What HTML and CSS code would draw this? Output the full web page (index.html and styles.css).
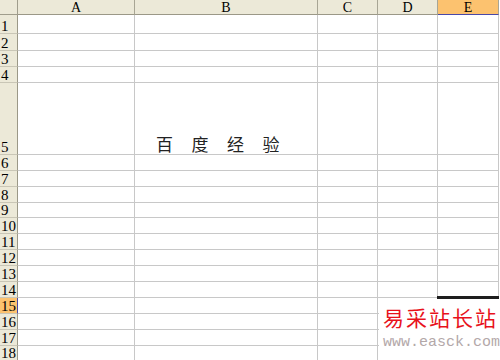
FILE: index.html
```html
<!DOCTYPE html>
<html>
<head>
<meta charset="utf-8">
<link rel="stylesheet" href="styles.css">
</head>
<body>
<div class="page">
  <div class="sheet">
    <div class="corner"></div>
    <div class="ch">A</div><div class="ch">B</div><div class="ch">C</div><div class="ch">D</div><div class="ch sel">E</div>

    <div class="rh">1</div><div class="c"></div><div class="c"></div><div class="c"></div><div class="c"></div><div class="c"></div>
    <div class="rh">2</div><div class="c"></div><div class="c"></div><div class="c"></div><div class="c"></div><div class="c"></div>
    <div class="rh">3</div><div class="c"></div><div class="c"></div><div class="c"></div><div class="c"></div><div class="c"></div>
    <div class="rh">4</div><div class="c"></div><div class="c"></div><div class="c"></div><div class="c"></div><div class="c"></div>
    <div class="rh">5</div><div class="c"></div><div class="c title-cell"><span class="title">百度经验</span></div><div class="c"></div><div class="c"></div><div class="c"></div>
    <div class="rh">6</div><div class="c"></div><div class="c"></div><div class="c"></div><div class="c"></div><div class="c"></div>
    <div class="rh">7</div><div class="c"></div><div class="c"></div><div class="c"></div><div class="c"></div><div class="c"></div>
    <div class="rh">8</div><div class="c"></div><div class="c"></div><div class="c"></div><div class="c"></div><div class="c"></div>
    <div class="rh">9</div><div class="c"></div><div class="c"></div><div class="c"></div><div class="c"></div><div class="c"></div>
    <div class="rh">10</div><div class="c"></div><div class="c"></div><div class="c"></div><div class="c"></div><div class="c"></div>
    <div class="rh">11</div><div class="c"></div><div class="c"></div><div class="c"></div><div class="c"></div><div class="c"></div>
    <div class="rh">12</div><div class="c"></div><div class="c"></div><div class="c"></div><div class="c"></div><div class="c"></div>
    <div class="rh">13</div><div class="c"></div><div class="c"></div><div class="c"></div><div class="c"></div><div class="c"></div>
    <div class="rh">14</div><div class="c"></div><div class="c"></div><div class="c"></div><div class="c"></div><div class="c"></div>
    <div class="rh sel">15</div><div class="c"></div><div class="c"></div><div class="c"></div><div class="c"></div><div class="c"></div>
    <div class="rh">16</div><div class="c"></div><div class="c"></div><div class="c"></div><div class="c"></div><div class="c"></div>
    <div class="rh">17</div><div class="c"></div><div class="c"></div><div class="c"></div><div class="c"></div><div class="c"></div>
    <div class="rh">18</div><div class="c"></div><div class="c"></div><div class="c"></div><div class="c"></div><div class="c"></div>
  </div>
  <div class="active-edge"></div>
  <div class="watermark">
    <div class="wm-title">易采站长站</div>
    <div class="wm-url">www.easck.com</div>
  </div>
</div>
</body>
</html>
```

FILE: styles.css
```css
html, body {
  margin: 0;
  padding: 0;
  background: #ffffff;
}
.page {
  position: relative;
  width: 500px;
  height: 360px;
  overflow: hidden;
}
.sheet {
  display: grid;
  grid-template-columns: 18px 117px 183px 60px 60px 61px;
  grid-template-rows: 15px 19px 17px 16px 16px 72px 16px 16px 16px 15px 16px 16px 16px 16px 16px 16px 16px 16px 15px;
  width: 500px;
  font-family: "Liberation Serif", serif;
  font-size: 14px;
  color: #000;
}
.sheet > div {
  box-sizing: border-box;
}
.corner {
  background: #ece9d8;
  border-right: 1px solid #a09d8c;
  border-bottom: 1px solid #a09d8c;
}
.ch {
  background: #ece9d8;
  border-right: 1px solid #a8a594;
  border-bottom: 1px solid #9b9887;
  display: flex;
  align-items: center;
  justify-content: center;
  line-height: 13px;
  padding-top: 1px;
}
.ch.sel {
  background: #fcc26f;
  border-bottom: 1px solid #4848a8;
}
.rh {
  background: #ece9d8;
  border-right: 1px solid #9b9887;
  border-bottom: 1px solid #c9c6b6;
  display: flex;
  align-items: flex-end;
  padding-left: 1px;
  line-height: 13px;
  font-size: 15px;
}
.rh.sel {
  background: #fcc26f;
  border-right: 1px solid #4848a8;
}
.c {
  border-right: 1px solid #c8c8c8;
  border-bottom: 1px solid #c8c8c8;
}
.title-cell {
  display: flex;
  align-items: flex-end;
  padding-left: 21px;
  padding-bottom: 2px;
}
.title {
  font-family: "Noto Sans CJK SC", sans-serif;
  font-size: 17px;
  line-height: 17px;
  letter-spacing: 18.5px;
  color: #222;
}
.active-edge {
  position: absolute;
  left: 437px;
  top: 296px;
  width: 62px;
  height: 3px;
  background: #1e1e1e;
}
.watermark {
  position: absolute;
  left: 379px;
  top: 299px;
  right: 0;
  bottom: 0;
  background: #ffffff;
  display: flex;
  flex-direction: column;
  padding: 6px 0 0 4px;
}
.wm-title {
  font-family: "Noto Sans CJK SC", sans-serif;
  font-size: 21px;
  line-height: 24px;
  letter-spacing: 2px;
  color: #e8121c;
}
.wm-url {
  font-family: "Liberation Mono", monospace;
  font-size: 15px;
  line-height: 16px;
  margin-top: 6px;
  color: #b3a8a9;
}
```
